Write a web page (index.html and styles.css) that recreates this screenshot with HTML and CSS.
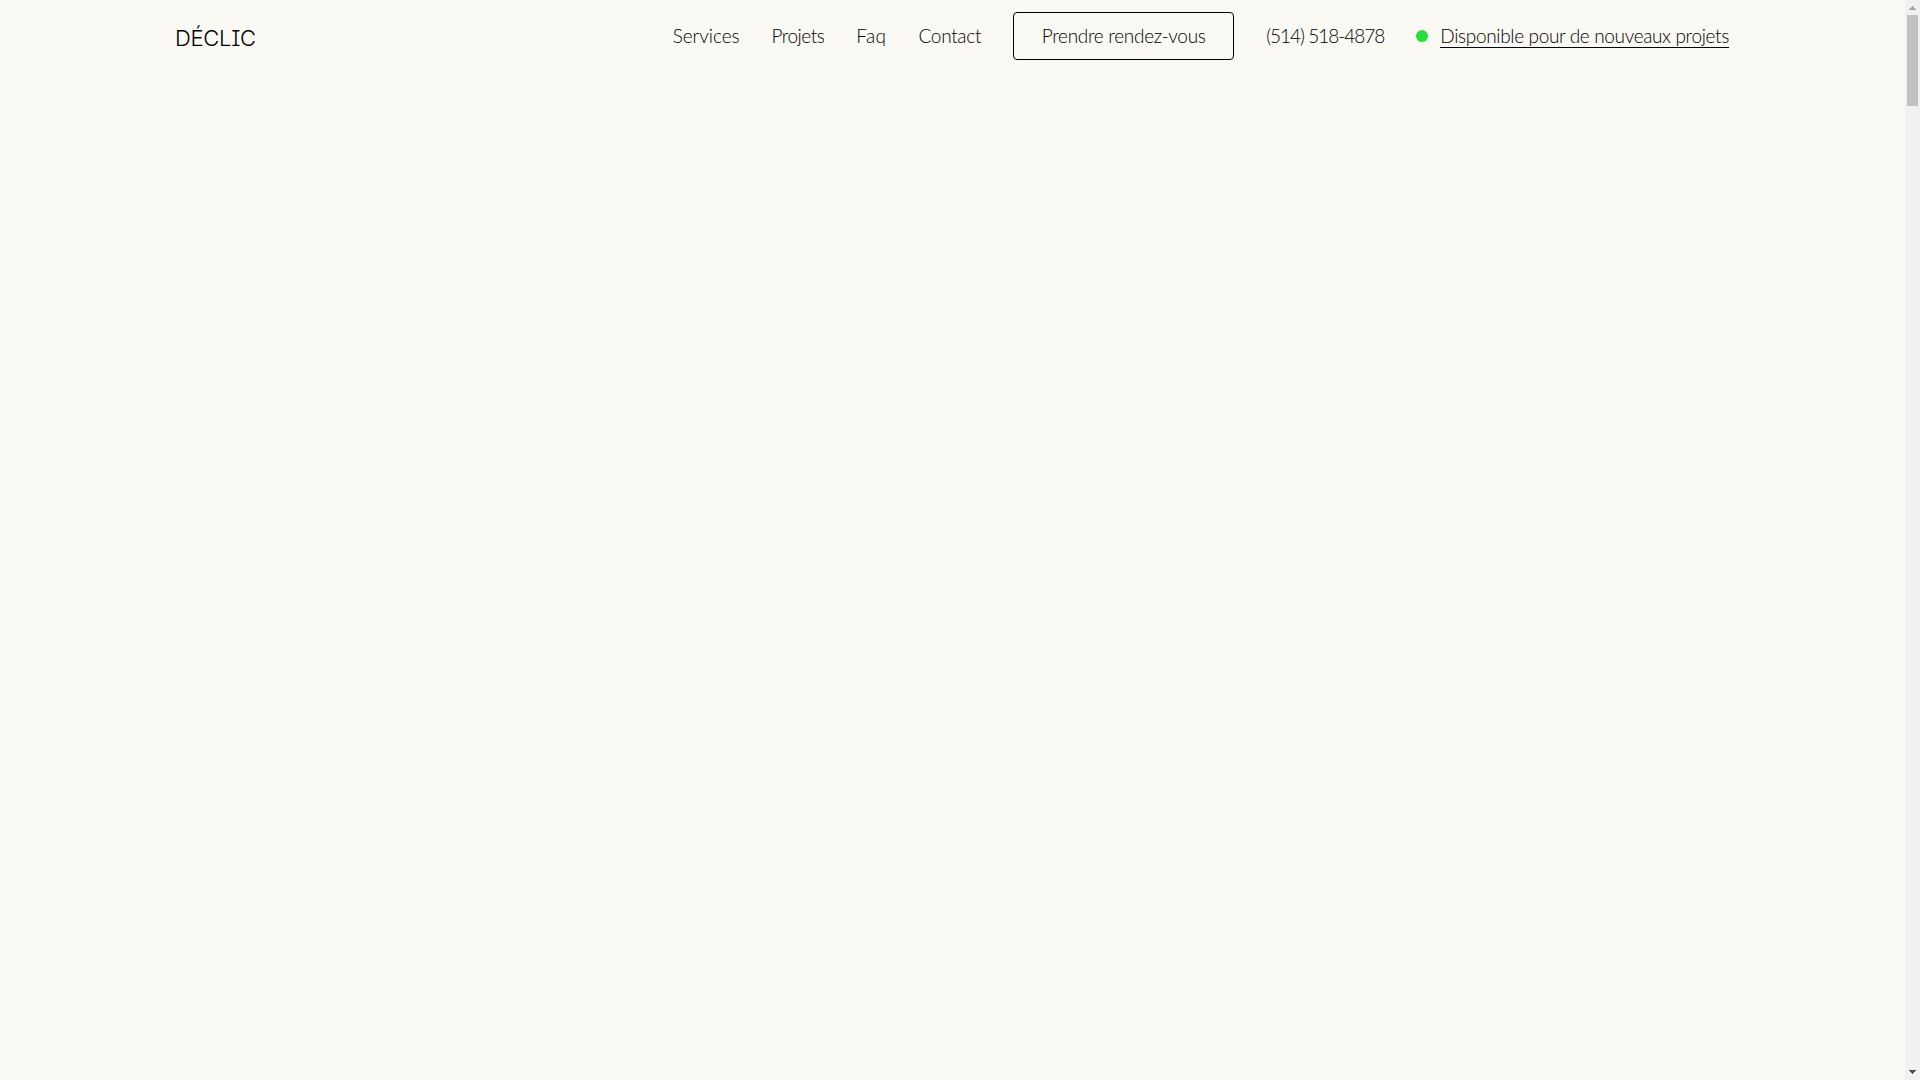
FILE: index.html
```html
<!DOCTYPE html>
<html lang="fr">
<head>
<meta charset="utf-8">
<title>Déclic</title>
<link rel="stylesheet" href="styles.css">
</head>
<body>
<div class="viewport">
  <div class="page">
    <header class="site-header">
      <a class="logo" href="#">DÉCLIC</a>
      <nav class="nav">
        <a class="nav-link services" href="#">Services</a>
        <a class="nav-link projets" href="#">Projets</a>
        <a class="nav-link faq" href="#">Faq</a>
        <a class="nav-link" href="#">Contact</a>
        <a class="cta" href="#">Prendre rendez-vous</a>
        <a class="nav-link phone" href="#">(514) 518-4878</a>
        <div class="status">
          <span class="dot"></span>
          <a class="status-link" href="#">Disponible pour de nouveaux projets</a>
        </div>
      </nav>
    </header>
  </div>
  <div class="scrollbar" aria-hidden="true">
    <svg class="arrow" width="15" height="15" viewBox="0 0 15 15" shape-rendering="crispEdges">
      <path class="arrow-up" d="M7 6h1v1h1v1h1v1h1v1H4V9h1V8h1V7h1z"/>
    </svg>
    <div class="track"><div class="thumb"></div></div>
    <svg class="arrow" width="15" height="15" viewBox="0 0 15 15" shape-rendering="crispEdges">
      <path class="arrow-down" d="M4 5h7v1h-1v1H9v1H8v1H7V8H6V7H5V6H4z"/>
    </svg>
  </div>
</div>
</body>
</html>
```
FILE: styles.css
```css
* { box-sizing: border-box; }
html, body { height: 100%; }
body {
  margin: 0;
  overflow: hidden;
  background: #faf9f4;
  color: #000;
  font-family: "Lato", "Liberation Sans", sans-serif;
  font-size: 19px;
}
a { color: inherit; text-decoration: none; }
.viewport {
  display: flex;
  height: 100%;
}
.page {
  flex: 1;
  min-width: 0;
}
.site-header {
  display: flex;
  align-items: center;
  justify-content: space-between;
  height: 72px;
  padding: 0 176px 0 175px;
}
.logo {
  font-family: "Inter", sans-serif;
  font-feature-settings: "cv08" 1;
  font-size: 22px;
  font-weight: 300;
  letter-spacing: -0.3px;
  margin-top: 4px;
}
.nav {
  display: flex;
  align-items: center;
  gap: 32px;
}
.nav-link, .cta, .status-link {
  font-weight: 300;
  letter-spacing: -0.3px;
}
.nav-link, .status-link {
  line-height: 23px;
  border-bottom: 1px solid transparent;
}
.services { letter-spacing: -0.05px; }
.projets { letter-spacing: -0.5px; }
.faq { letter-spacing: 0.4px; }
.phone { letter-spacing: -1px; }
.cta {
  display: flex;
  align-items: center;
  justify-content: center;
  width: 221px;
  height: 48px;
  padding-bottom: 2px;
  border: 1px solid #000;
  border-radius: 4px;
}
.status {
  display: flex;
  align-items: center;
  gap: 12px;
}
.dot {
  width: 12px;
  height: 12px;
  border-radius: 50%;
  background: #22e038;
}
.status-link {
  letter-spacing: -0.35px;
  border-bottom-color: #000;
}
.scrollbar {
  display: flex;
  flex-direction: column;
  flex: 0 0 15px;
  background: #f1f1f1;
}
.arrow { display: block; flex: none; }
.arrow-up { fill: #a3a3a3; }
.arrow-down { fill: #505050; }
.track {
  flex: 1;
  padding: 0 2px;
}
.thumb {
  height: 91px;
  background: #c1c1c1;
}
```
